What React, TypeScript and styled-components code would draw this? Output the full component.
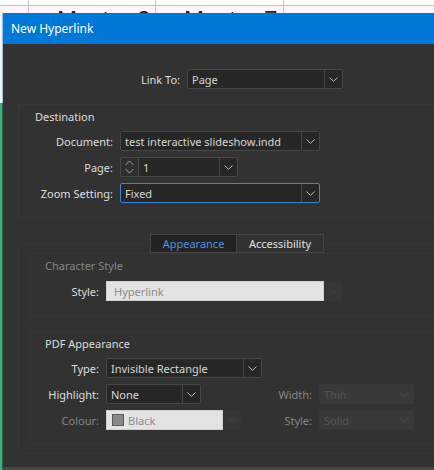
import React from "react";
import styled, { createGlobalStyle } from "styled-components";

const GlobalStyle = createGlobalStyle`
    html, body {
        margin: 0;
        padding: 0;
        background: #ffffff;
    }
    body {
        font-family: "Noto Sans", "Open Sans", sans-serif;
        font-size: 11px;
    }
`

const Chevron = ({ color = "#b8b8b8" }: { color?: string }) => (
    <svg width="9" height="5" viewBox="0 0 9 5">
        <path d="M0.5 0.5 L4.5 4.3 L8.5 0.5" fill="none" stroke={color} strokeWidth="1" />
    </svg>
)

interface dropProps {
    text: string
    width: number
    focused?: boolean
    disabled?: boolean
}

const Dropdown = ({ text, width, focused, disabled }: dropProps) => (
    <Drop $w={width} $focused={!!focused} $disabled={!!disabled}>
        <DropText $disabled={!!disabled}>{text}</DropText>
        <DropArrow $disabled={!!disabled}>
            <Chevron color={disabled ? "#4a4a4a" : "#b8b8b8"} />
        </DropArrow>
    </Drop>
)

const App = () => {
    return (
        <Screen>
            <GlobalStyle />
            <TopStrip>
                <MasterCell $w={12} />
                <MasterCell $w={127}>Master 2</MasterCell>
                <MasterCell $w={128}>Master 7</MasterCell>
            </TopStrip>
            <Main>
                <SideStrip>
                    <SideTop />
                    <SideBottom />
                </SideStrip>
                <Dialog>
                    <TitleBar>New Hyperlink</TitleBar>
                    <Body>
                        <FieldRow>
                            <Label $w={162}>Link To:</Label>
                            <Dropdown text="Page" width={156} />
                        </FieldRow>

                        <Group $mt={15} $pl={16} $pb={14}>
                            <GroupTitle>Destination</GroupTitle>
                            <Rows $mt={7}>
                                <FieldRow>
                                    <Label $w={94}>Document:</Label>
                                    <Dropdown text="test interactive slideshow.indd" width={200} />
                                </FieldRow>
                                <FieldRow>
                                    <Label $w={94}>Page:</Label>
                                    <Spinner>
                                        <SpinButtons>
                                            <svg width="9" height="14" viewBox="0 0 9 14">
                                                <path d="M0.5 5 L4.5 1 L8.5 5" fill="none" stroke="#9a9a9a" strokeWidth="1" />
                                                <path d="M0.5 9 L4.5 13 L8.5 9" fill="none" stroke="#9a9a9a" strokeWidth="1" />
                                            </svg>
                                        </SpinButtons>
                                        <DropText $disabled={false}>1</DropText>
                                        <DropArrow $disabled={false}>
                                            <Chevron />
                                        </DropArrow>
                                    </Spinner>
                                </FieldRow>
                                <FieldRow>
                                    <Label $w={94}>Zoom Setting:</Label>
                                    <Dropdown text="Fixed" width={200} focused />
                                </FieldRow>
                            </Rows>
                        </Group>

                        <Tabs>
                            <Tab $active>Appearance</Tab>
                            <Tab $active={false}>Accessibility</Tab>
                        </Tabs>
                        <TabPanel>
                            <Group $mt={0} $pl={14} $pb={15}>
                                <GroupTitle $dim>Character Style</GroupTitle>
                                <Rows $mt={8}>
                                    <FieldRow>
                                        <Label $w={68}>Style:</Label>
                                        <LightField>
                                            <LightBox $w={218}>
                                                <LightText>Hyperlink</LightText>
                                            </LightBox>
                                            <DeadArrow>
                                                <Chevron color="#454545" />
                                            </DeadArrow>
                                        </LightField>
                                    </FieldRow>
                                </Rows>
                            </Group>

                            <Group $mt={14} $pl={14} $pb={13}>
                                <GroupTitle>PDF Appearance</GroupTitle>
                                <Rows $mt={7}>
                                    <FieldRow>
                                        <Label $w={68}>Type:</Label>
                                        <Dropdown text="Invisible Rectangle" width={156} />
                                    </FieldRow>
                                    <FieldRow>
                                        <Label $w={68}>Highlight:</Label>
                                        <Cell $w={134}>
                                            <Dropdown text="None" width={95} />
                                        </Cell>
                                        <Label $w={65} $dim>Width:</Label>
                                        <Dropdown text="Thin" width={95} disabled />
                                    </FieldRow>
                                    <FieldRow>
                                        <Label $w={68} $dim>Colour:</Label>
                                        <Cell $w={134}>
                                            <LightField>
                                                <LightBox $w={117}>
                                                    <Swatch />
                                                    <LightText>Black</LightText>
                                                </LightBox>
                                                <DeadArrow>
                                                    <Chevron color="#454545" />
                                                </DeadArrow>
                                            </LightField>
                                        </Cell>
                                        <Label $w={65} $dim>Style:</Label>
                                        <Dropdown text="Solid" width={95} disabled />
                                    </FieldRow>
                                </Rows>
                            </Group>
                        </TabPanel>
                    </Body>
                </Dialog>
            </Main>
        </Screen>
    )
}

export default App

const Screen = styled.div`
    width: 434px;
    height: 470px;
    overflow: hidden;
    display: flex;
    flex-direction: column;
    background: #ffffff;
`

const TopStrip = styled.div`
    height: 13px;
    flex-shrink: 0;
    display: flex;
    overflow: hidden;
    background: linear-gradient(#ffffff 0 5px, #e8a6e8 5px 6px, #fdf6fd 6px);
`

const MasterCell = styled.div<{ $w: number }>`
    width: ${({ $w }) => $w}px;
    height: 13px;
    flex-shrink: 0;
    border-right: 1px solid #c8c8d0;
    box-sizing: border-box;
    padding: 8px 0 0 28px;
    font-family: "Liberation Sans", Arial, sans-serif;
    font-size: 24px;
    line-height: 24px;
    color: #222;
    white-space: nowrap;
    overflow: hidden;
`

const Main = styled.div`
    flex: 1;
    display: flex;
    min-height: 0;
`

const SideStrip = styled.div`
    width: 3px;
    flex-shrink: 0;
    display: flex;
    flex-direction: column;
`

const SideTop = styled.div`
    height: 90px;
    background: linear-gradient(90deg, #f2f4f8 0 2px, #9cc3e6 2px);
`

const SideBottom = styled.div`
    flex: 1;
    background: linear-gradient(90deg, #3fae7e 0 2px, #2a6a50 2px);
`

const Dialog = styled.div`
    flex: 1;
    display: flex;
    flex-direction: column;
    background: #323232;
    border-bottom: 3px solid #454545;
`

const TitleBar = styled.div`
    height: 31px;
    flex-shrink: 0;
    background: #0078d7;
    color: #ffffff;
    font-size: 12px;
    display: flex;
    align-items: center;
    padding-left: 8px;
    padding-bottom: 1px;
    box-sizing: border-box;
`

const Body = styled.div`
    flex: 1;
    padding: 25px 0 0 15px;
    display: flex;
    flex-direction: column;
`

const FieldRow = styled.div`
    display: flex;
    align-items: center;
    height: 20px;
    gap: 7px;
`

const Label = styled.div<{ $w: number; $dim?: boolean }>`
    width: ${({ $w }) => $w}px;
    flex-shrink: 0;
    text-align: right;
    color: ${({ $dim }) => ($dim ? "#858585" : "#dedede")};
    white-space: nowrap;
`

const Cell = styled.div<{ $w: number }>`
    width: ${({ $w }) => $w}px;
    flex-shrink: 0;
    display: flex;
`

const Group = styled.div<{ $mt: number; $pl: number; $pb: number }>`
    margin-top: ${({ $mt }) => $mt}px;
    border: 1px solid #373737;
    border-right: none;
    padding: 5px 0 ${({ $pb }) => $pb}px 0;
    display: flex;
    flex-direction: column;
    & > div:first-child {
        padding-left: ${({ $pl }) => $pl}px;
    }
`

const GroupTitle = styled.div<{ $dim?: boolean }>`
    line-height: 14px;
    color: ${({ $dim }) => ($dim ? "#858585" : "#dedede")};
`

const Rows = styled.div<{ $mt: number }>`
    margin-top: ${({ $mt }) => $mt}px;
    display: flex;
    flex-direction: column;
    gap: 6px;
`

const Drop = styled.div<{ $w: number; $focused: boolean; $disabled: boolean }>`
    width: ${({ $w }) => $w}px;
    height: 20px;
    box-sizing: border-box;
    display: flex;
    align-items: stretch;
    border: 1px solid ${({ $focused, $disabled }) => ($focused ? "#3a86d4" : $disabled ? "#383838" : "#474747")};
    border-radius: 2px;
    background: ${({ $disabled }) => ($disabled ? "#393939" : "#272727")};
`

const DropText = styled.div<{ $disabled: boolean }>`
    flex: 1;
    padding-left: 4px;
    display: flex;
    align-items: center;
    color: ${({ $disabled }) => ($disabled ? "#545454" : "#d6d6d6")};
    white-space: nowrap;
    overflow: hidden;
`

const DropArrow = styled.div<{ $disabled: boolean }>`
    width: 17px;
    flex-shrink: 0;
    display: flex;
    align-items: center;
    justify-content: center;
    border-left: 1px solid ${({ $disabled }) => ($disabled ? "transparent" : "#474747")};
`

const Spinner = styled.div`
    width: 118px;
    height: 20px;
    box-sizing: border-box;
    display: flex;
    align-items: stretch;
    border: 1px solid #474747;
    border-radius: 2px;
    background: #272727;
`

const SpinButtons = styled.div`
    width: 17px;
    flex-shrink: 0;
    display: flex;
    align-items: center;
    justify-content: center;
    border-right: 1px solid #474747;
    background: #2e2e2e;
`

const LightField = styled.div`
    display: flex;
    height: 20px;
`

const LightBox = styled.div<{ $w: number }>`
    width: ${({ $w }) => $w}px;
    box-sizing: border-box;
    background: #e3e3e3;
    border: 1px solid #d0d0d0;
    display: flex;
    align-items: center;
    gap: 4px;
    padding-left: 7px;
`

const LightText = styled.span`
    color: #8c8c8c;
`

const Swatch = styled.span`
    width: 12px;
    height: 12px;
    box-sizing: border-box;
    background: #888888;
    border: 1px solid #5a5a5a;
    margin-left: -2px;
`

const DeadArrow = styled.div`
    width: 18px;
    display: flex;
    align-items: center;
    justify-content: center;
    background: #363636;
    border-radius: 0 2px 2px 0;
`

const Tabs = styled.div`
    margin-top: 16px;
    display: flex;
    padding-left: 132px;
    position: relative;
    z-index: 1;
`

const Tab = styled.div<{ $active: boolean }>`
    width: 87px;
    height: 19px;
    box-sizing: border-box;
    display: flex;
    align-items: center;
    justify-content: center;
    background: ${({ $active }) => ($active ? "#222222" : "#323232")};
    color: ${({ $active }) => ($active ? "#4b93e0" : "#e0e0e0")};
    border: 1px solid #444444;
    border-left: ${({ $active }) => ($active ? "1px solid #444444" : "none")};
`

const TabPanel = styled.div`
    margin-top: -10px;
    border: 1px solid #373737;
    border-right: none;
    padding: 9px 0 9px 11px;
    display: flex;
    flex-direction: column;
`
